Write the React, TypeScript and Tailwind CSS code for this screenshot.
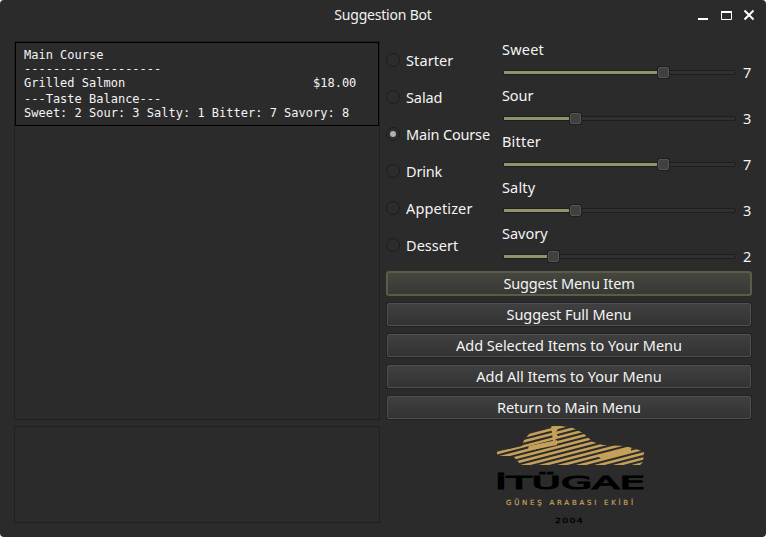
const courses = [
  { name: "Starter", cls: "tracking-[0.1px]" },
  { name: "Salad", cls: "tracking-[-0.1px]" },
  { name: "Main Course", cls: "tracking-[-0.17px]" },
  { name: "Drink", cls: "tracking-[-0.2px]" },
  { name: "Appetizer", cls: "tracking-[0.15px]" },
  { name: "Dessert", cls: "tracking-[0.05px]" },
];

const tastes = [
  { name: "Sweet", value: 7, cls: "tracking-[0.2px]" },
  { name: "Sour", value: 3, cls: "tracking-[-0.1px]" },
  { name: "Bitter", value: 7, cls: "tracking-[0.2px]" },
  { name: "Salty", value: 3, cls: "tracking-[0.15px]" },
  { name: "Savory", value: 2, cls: "tracking-[0px]" },
];

const actions = [
  { name: "Suggest Full Menu", cls: "tracking-[-0.05px]" },
  { name: "Add Selected Items to Your Menu", cls: "tracking-[-0.02px]" },
  { name: "Add All Items to Your Menu", cls: "tracking-[-0.02px]" },
  { name: "Return to Main Menu", cls: "tracking-[-0.05px]" },
];

function TitleBar() {
  return (
    <header className="grid h-[30px] grid-cols-[1fr_auto_1fr] items-center">
      <span />
      <h1 className="text-[14px] leading-[30px] tracking-[-0.2px] text-[#f2f2f2]">Suggestion Bot</h1>
      <svg className="mr-[10px] justify-self-end" width="60" height="30" viewBox="0 0 60 30" fill="none" stroke="#fff">
        <path d="M2 19h10" strokeWidth="2" />
        <path d="M25.500 11v8.500h10V11" />
        <path d="M25 12h11" strokeWidth="2" />
        <path d="M48.500 10.500l9 9M57.500 10.500l-9 9" strokeWidth="2" />
      </svg>
    </header>
  );
}

function Receipt() {
  return (
    <div className="h-[84px] w-[364px] border border-black pt-[5px] pl-[8px] font-['DejaVu_Sans_Mono',monospace] text-[12px] leading-[14px] whitespace-pre text-[#f4f4f4]">
      <p>Main Course</p>
      <p>-------------------</p>
      <p>{"Grilled Salmon" + " ".repeat(26) + "$18.00"}</p>
      <p className="pt-[2px]">---Taste Balance---</p>
      <p>Sweet: 2 Sour: 3 Salty: 1 Bitter: 7 Savory: 8</p>
    </div>
  );
}

function Courses() {
  return (
    <div className="w-[116px]">
      {courses.map((c) => (
        <label key={c.name} className="flex h-[37px] items-center gap-[6px]">
          <span className="flex size-[14px] shrink-0 items-center justify-center rounded-full border border-[#1d1d1d] bg-[#2c2c2c]">
            {c.name === "Main Course" && <span className="size-[6px] rounded-full bg-[#b0b0b0]" />}
          </span>
          <span className={"whitespace-nowrap " + c.cls}>{c.name}</span>
        </label>
      ))}
    </div>
  );
}

function Taste({ name, value, cls }: { name: string; value: number; cls: string }) {
  const x = 7 + value * 22;
  return (
    <div className="h-[46px]">
      <div className={"h-[20px] leading-[20px] " + cls}>{name}</div>
      <div className="flex h-[26px] items-center">
        <div className="relative ml-[1px] h-[5px] w-[233px] rounded-[2px] border border-[#1e1e1e] bg-[#303030]">
          <div className="h-[3px] bg-[#92936a]" style={{ width: x - 6 }} />
          <div
            className="absolute -top-[4px] size-[11px] rounded-[2px] border border-[#555] bg-[#404040] shadow-[0_0_0_1px_#1f1f1f]"
            style={{ left: x - 7 }}
          />
        </div>
        <span className="ml-[7px]">{value}</span>
      </div>
    </div>
  );
}

function Logo() {
  const stripes = Array.from({ length: 24 }, (_, i) => i * 4.8 - 6);
  return (
    <svg width="170" height="110" viewBox="0 0 170 110">
      <clipPath id="car">
        <path d="M12 31L24 30L37 27L39 21L45 14L60 9L68 7L76 7L88 9L98 14L108 23L118 26L140 27L151 30L159 33L158 43L155 46L36 46L28 37L12 37Z" />
      </clipPath>
      <g clipPath="url(#car)" stroke="#c5a059" strokeWidth="2.600">
        {stripes.map((y) => (
          <path key={y} d={`M0 ${y + 24}L170 ${y - 20}`} />
        ))}
        <path d="M66 7h9l-4 6l2 5l-5 5l-1-9zM44 27l28-6v5l-30 6zM112 36l34-7v4l-30 7z" stroke="none" fill="#c5a059" />
      </g>
      <text
        x="10"
        y="70"
        textLength="150"
        lengthAdjust="spacingAndGlyphs"
        className="fill-black stroke-black stroke-[1px] font-['DejaVu_Sans'] text-[17px]"
      >
        İTÜGAE
      </text>
      <text
        x="21"
        y="86"
        textLength="127"
        className="fill-[#c5a059] stroke-[#c5a059] stroke-[0.2px] font-['DejaVu_Sans'] text-[7px]"
      >
        GÜNEŞ ARABASI EKİBİ
      </text>
      <text
        x="70"
        y="104"
        textLength="29"
        lengthAdjust="spacingAndGlyphs"
        className="fill-black stroke-black stroke-[0.3px] font-['DejaVu_Sans'] text-[7px] tracking-[1px]"
      >
        2004
      </text>
    </svg>
  );
}

export default function App() {
  return (
    <div className="h-[537px] w-[766px] overflow-hidden bg-white">
      <div className="flex h-full flex-col rounded-[4px] bg-[#2b2b2b] font-['Noto_Sans',sans-serif] text-[14.5px] leading-[20px] text-[#f4f4f4]">
        <TitleBar />
        <main className="flex pt-[11px] pl-[14px]">
          <div className="flex w-[366px] flex-col gap-[6px]">
            <div className="h-[379px] border border-[#202020]">
              <Receipt />
            </div>
            <div className="h-[97px] border border-[#202020]" />
          </div>
          <div className="ml-[6px] flex w-[366px] flex-col">
            <div className="flex h-[230px]">
              <Courses />
              <div className="-mt-[2px] flex-1">
                {tastes.map((t) => (
                  <Taste key={t.name} {...t} />
                ))}
              </div>
            </div>
            <button className="flex h-[25px] items-start justify-center rounded-[3px] border-2 border-[#5a5c46] bg-linear-to-b from-[#45463f] to-[#383935] leading-[20px]">
              <span className="tracking-[-0.15px]">Suggest Menu Item</span>
            </button>
            <div className="mx-px mt-[7px] flex flex-col gap-[8px]">
              {actions.map((a) => (
                <button
                  key={a.name}
                  className="flex h-[23px] items-start justify-center rounded-[2px] border border-[#505050] bg-linear-to-b from-[#404040] to-[#333] leading-[20px] shadow-[0_0_0_1px_#222]"
                >
                  <span className={a.cls}>{a.name}</span>
                </button>
              ))}
            </div>
            <div className="ml-[99px]">
              <Logo />
            </div>
          </div>
        </main>
      </div>
    </div>
  );
}
